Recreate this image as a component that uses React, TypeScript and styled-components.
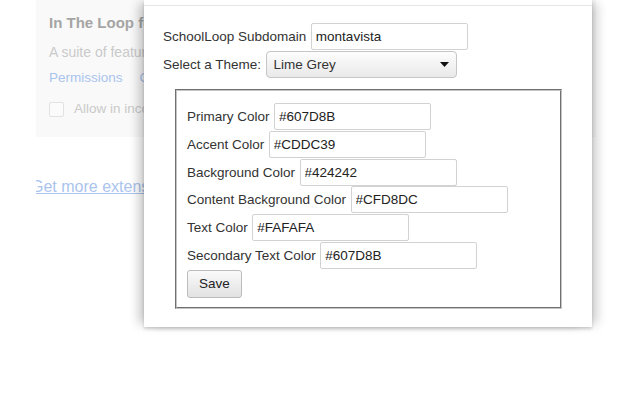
import React from 'react';
import styled, { createGlobalStyle } from 'styled-components';

const Global = createGlobalStyle`
  html, body { margin: 0; padding: 0; background: #fff; }
  body { font-family: "Liberation Sans", Arial, Helvetica, sans-serif; }
`;

const Viewport = styled.div`
  position: relative;
  width: 640px;
  height: 400px;
  overflow: hidden;
  background: #fff;
`;

const ExtList = styled.div`
  display: flex;
  flex-direction: column;
  padding-left: 36px;
`;

const Card = styled.div`
  width: 560px;
  height: 137px;
  box-sizing: border-box;
  background: #f9f9f9;
  padding: 14px 0 0 13px;
  display: flex;
  flex-direction: column;
`;

const CardTitle = styled.div`
  font-size: 15px;
  line-height: 18px;
  font-weight: bold;
  color: #a5a5a5;
  white-space: nowrap;
`;

const CardDesc = styled.div`
  margin-top: 12px;
  font-size: 14px;
  line-height: 16px;
  color: #cacaca;
  white-space: nowrap;
`;

const CardLinks = styled.div`
  margin-top: 10px;
  display: flex;
  gap: 17px;
  font-size: 13.5px;
  line-height: 16px;
  color: #aac4ee;
`;

const CheckRow = styled.label`
  margin-top: 15px;
  display: flex;
  align-items: center;
  gap: 10px;
  font-size: 13.5px;
  line-height: 16px;
  color: #cacaca;
  white-space: nowrap;
`;

const FakeCheck = styled.span`
  width: 13px;
  height: 13px;
  border: 1px solid #e2e2e2;
  border-radius: 2px;
  background: #fbfbfb;
`;

const MoreClip = styled.div`
  margin-top: 40px;
  overflow: hidden;
`;

const MoreLink = styled.a`
  display: block;
  margin-left: -5px;
  font-size: 16px;
  line-height: 19px;
  color: #aac4ee;
  text-decoration: underline;
  white-space: nowrap;
`;

const Dialog = styled.div`
  position: absolute;
  left: 144px;
  top: 0;
  width: 448px;
  height: 327px;
  background: #fff;
  box-shadow: -8px 0 10px -3px rgba(0, 0, 0, 0.22), 8px 0 10px -3px rgba(0, 0, 0, 0.2),
    0 2px 3px rgba(0, 0, 0, 0.16);
  display: flex;
  flex-direction: column;
`;

const DialogHeader = styled.div`
  height: 5px;
  border-bottom: 1px solid #e4e4e4;
`;

const DialogBody = styled.div`
  padding: 17px 0 0 19px;
  display: flex;
  flex-direction: column;
  gap: 1px;
  font-size: 13.5px;
  color: #333;
`;

const Row = styled.div<{ $h?: number }>`
  display: flex;
  align-items: center;
  gap: 4.5px;
  height: ${(p) => p.$h ?? 27}px;
  white-space: nowrap;
`;

const Label = styled.span`
  font-size: 13.5px;
  color: #333;
`;

const TextInput = styled.input`
  box-sizing: border-box;
  width: 157px;
  height: 27px;
  margin: 0;
  padding: 0 4px;
  border: 1px solid #d2d2d2;
  border-radius: 2px;
  font-family: "Liberation Sans", Arial, sans-serif;
  font-size: 13.5px;
  color: #222;
  background: #fff;
  outline: none;
`;

const SelectWrap = styled.div`
  position: relative;
  width: 191px;
  height: 27px;
`;

const Select = styled.select`
  appearance: none;
  box-sizing: border-box;
  width: 100%;
  height: 100%;
  margin: 0;
  padding: 0 0 0 7px;
  border: 1px solid #c6c6c6;
  border-radius: 4px;
  background: linear-gradient(#fdfdfd, #e9e9e9);
  font-family: "Liberation Sans", Arial, sans-serif;
  font-size: 13.5px;
  color: #333;
  outline: none;
`;

const Arrow = styled.svg`
  position: absolute;
  right: 8px;
  top: 11px;
  pointer-events: none;
`;

const ColorBox = styled.div`
  margin: 10px 0 0 12px;
  box-sizing: border-box;
  width: 387px;
  height: 220px;
  border: 2px groove #c4c4c4;
  padding: 12px 0 0 10px;
  display: flex;
  flex-direction: column;
  gap: 0.8px;
`;

const SaveButton = styled.button`
  box-sizing: border-box;
  width: 55px;
  height: 28px;
  margin: 0;
  padding: 0;
  border: 1px solid #bcbcbc;
  border-radius: 3px;
  background: linear-gradient(#fafafa, #e2e2e2);
  font-family: "Liberation Sans", Arial, sans-serif;
  font-size: 13.5px;
  color: #222;
`;

const colors: [string, string][] = [
  ['Primary Color', '#607D8B'],
  ['Accent Color', '#CDDC39'],
  ['Background Color', '#424242'],
  ['Content Background Color', '#CFD8DC'],
  ['Text Color', '#FAFAFA'],
  ['Secondary Text Color', '#607D8B'],
];

export default function App() {
  return (
    <>
      <Global />
      <Viewport>
        <ExtList>
          <Card>
            <CardTitle>In The Loop for SchoolLoop</CardTitle>
            <CardDesc>A suite of features for SchoolLoop</CardDesc>
            <CardLinks>
              <span>Permissions</span>
              <span>Options</span>
            </CardLinks>
            <CheckRow>
              <FakeCheck />
              Allow in incognito
            </CheckRow>
          </Card>
          <MoreClip>
            <MoreLink>Get more extensions</MoreLink>
          </MoreClip>
        </ExtList>

        <Dialog>
          <DialogHeader />
          <DialogBody>
            <Row>
              <Label>SchoolLoop Subdomain</Label>
              <TextInput defaultValue="montavista" />
            </Row>
            <Row>
              <Label>Select a Theme:</Label>
              <SelectWrap>
                <Select defaultValue="lime">
                  <option value="lime">Lime Grey</option>
                </Select>
                <Arrow width="9" height="5" viewBox="0 0 9 5">
                  <path d="M0 0 H9 L4.5 5 Z" fill="#111" />
                </Arrow>
              </SelectWrap>
            </Row>
            <ColorBox>
              {colors.map(([label, value]) => (
                <Row key={label}>
                  <Label>{label}</Label>
                  <TextInput defaultValue={value} />
                </Row>
              ))}
              <Row $h={28}>
                <SaveButton>Save</SaveButton>
              </Row>
            </ColorBox>
          </DialogBody>
        </Dialog>
      </Viewport>
    </>
  );
}
